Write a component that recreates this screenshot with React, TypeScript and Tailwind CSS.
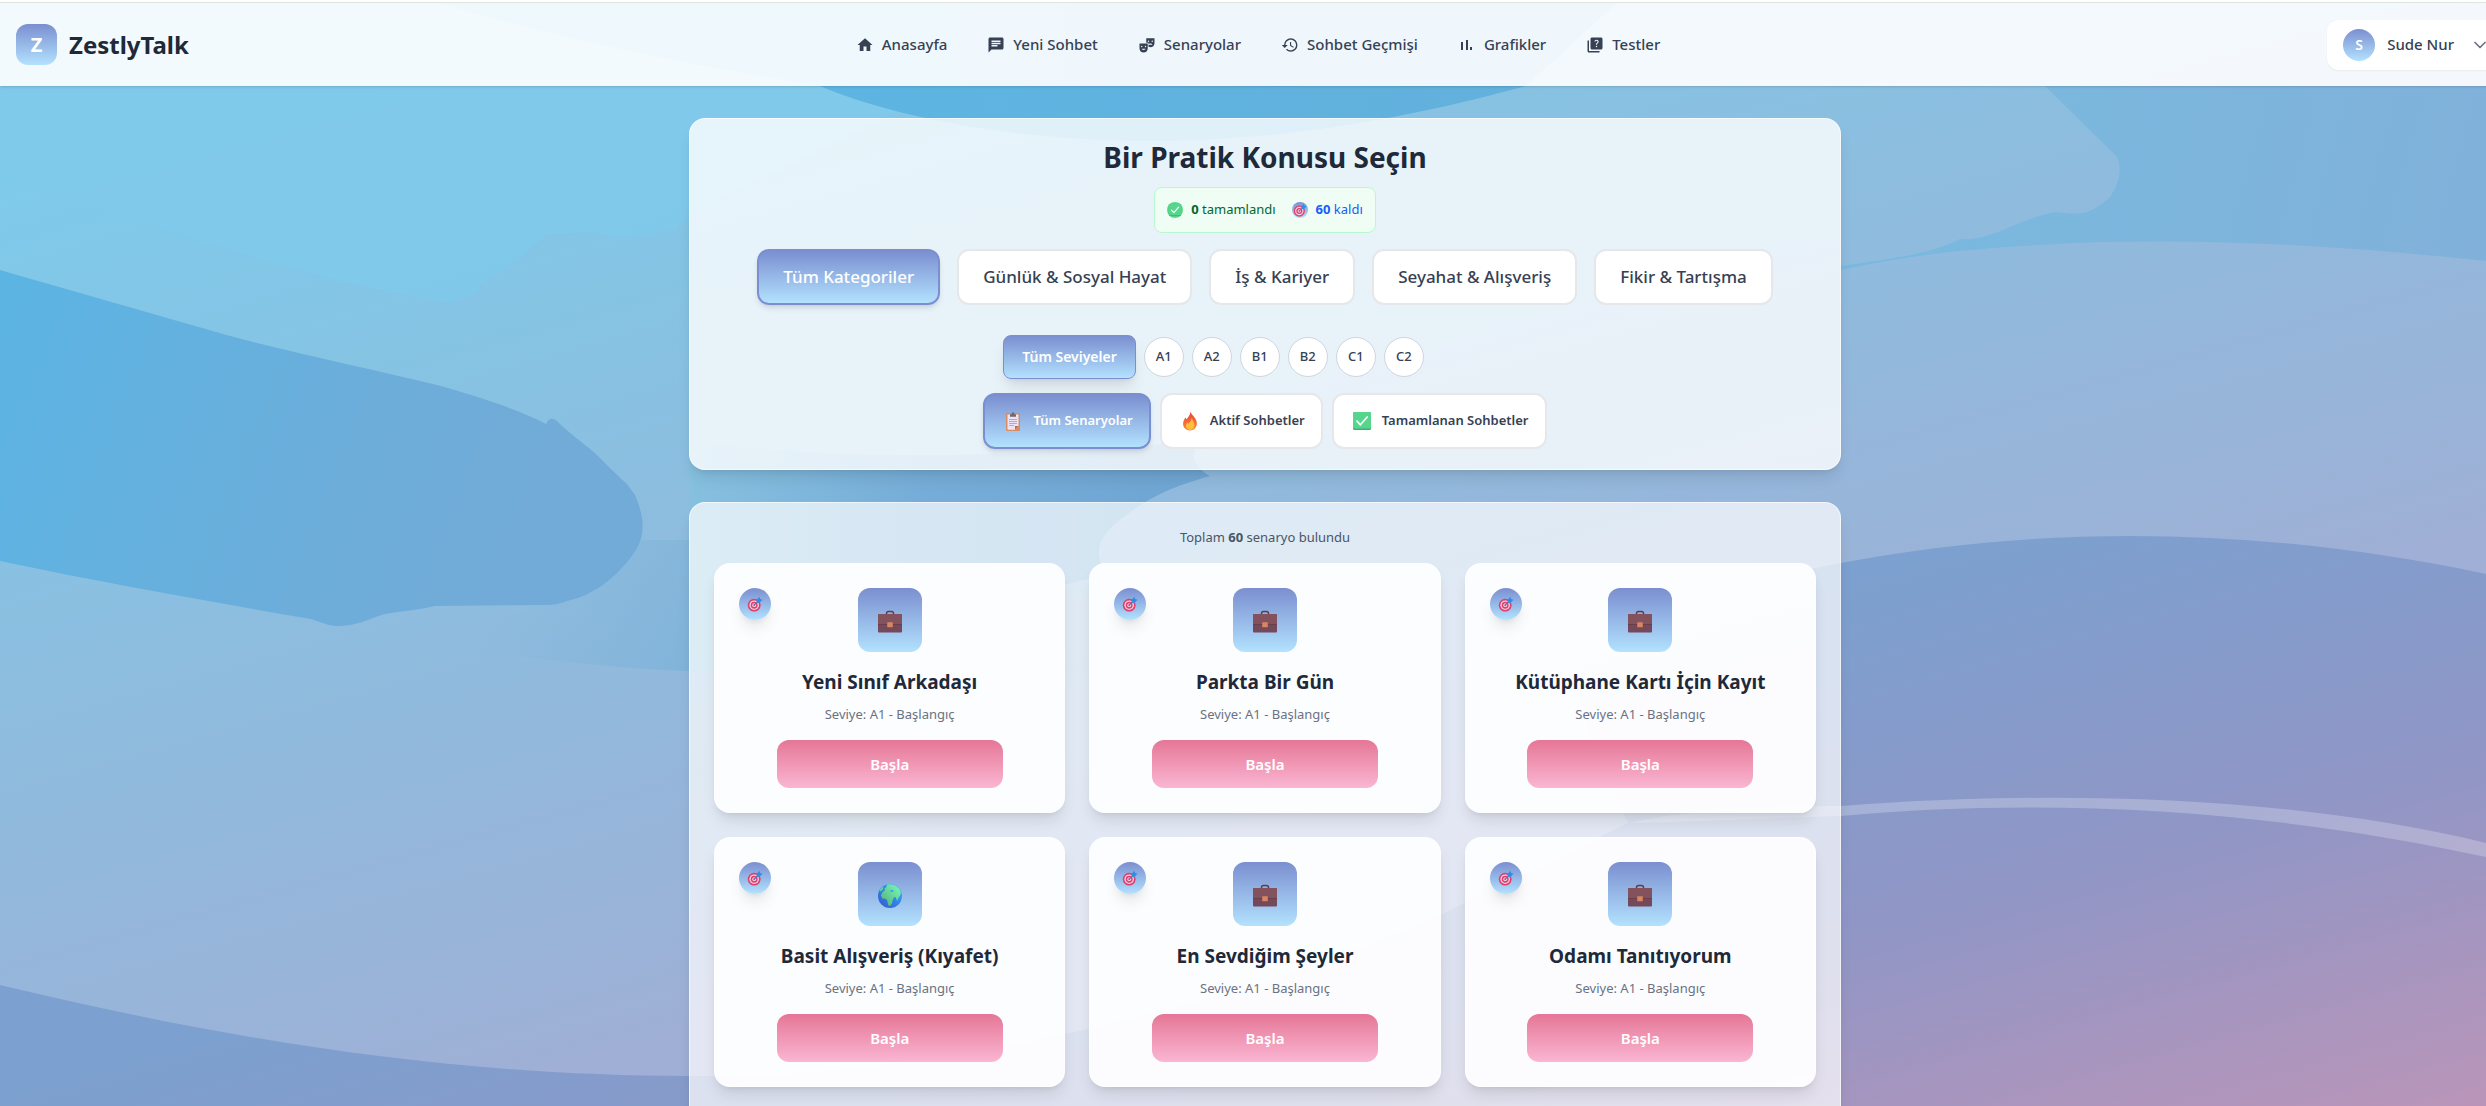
import React from "react";
import { MdHome, MdChat, MdTheaterComedy, MdHistory, MdQuiz } from "react-icons/md";
import { ChevronDown } from "lucide-react";

function BarsIcon({ className }: { className?: string }) {
  return (
    <svg className={className} viewBox="0 0 18 18" fill="currentColor" aria-hidden="true">
      <rect x="3" y="6" width="2" height="8" />
      <rect x="8" y="4" width="2" height="10" />
      <rect x="12" y="11" width="2" height="3" />
    </svg>
  );
}

const navItems = [
  { label: "Anasayfa", Icon: MdHome },
  { label: "Yeni Sohbet", Icon: MdChat },
  { label: "Senaryolar", Icon: MdTheaterComedy },
  { label: "Sohbet Geçmişi", Icon: MdHistory },
  { label: "Grafikler", Icon: BarsIcon },
  { label: "Testler", Icon: MdQuiz },
];

const categories = ["Günlük & Sosyal Hayat", "İş & Kariyer", "Seyahat & Alışveriş", "Fikir & Tartışma"];
const levels = ["A1", "A2", "B1", "B2", "C1", "C2"];

const scenarios = [
  { title: "Yeni Sınıf Arkadaşı", icon: "briefcase" },
  { title: "Parkta Bir Gün", icon: "briefcase" },
  { title: "Kütüphane Kartı İçin Kayıt", icon: "briefcase" },
  { title: "Basit Alışveriş (Kıyafet)", icon: "globe" },
  { title: "En Sevdiğim Şeyler", icon: "briefcase" },
  { title: "Odamı Tanıtıyorum", icon: "briefcase" },
];

function Wallpaper() {
  return (
    <svg
      className="absolute inset-0 h-full w-full"
      viewBox="0 0 2486 1106"
      preserveAspectRatio="none"
      aria-hidden="true"
    >
      <defs>
        <linearGradient id="sky" gradientUnits="userSpaceOnUse" x1="0" y1="80" x2="296" y2="1136">
          <stop offset="0" stopColor="#7acdea" />
          <stop offset=".12" stopColor="#80c9ea" />
          <stop offset=".35" stopColor="#86c3e3" />
          <stop offset=".65" stopColor="#90badd" />
          <stop offset=".9" stopColor="#9ab3d8" />
          <stop offset="1" stopColor="#9fafd5" />
        </linearGradient>
        <linearGradient id="dusk" gradientUnits="userSpaceOnUse" x1="2000" y1="540" x2="2182" y2="1191">
          <stop offset="0" stopColor="#7ca0cf" />
          <stop offset=".5" stopColor="#9096c6" />
          <stop offset="1" stopColor="#ba95b9" />
        </linearGradient>
        <linearGradient id="stroke" gradientUnits="userSpaceOnUse" x1="0" y1="350" x2="500" y2="560">
          <stop offset="0" stopColor="#5cb4e3" />
          <stop offset=".7" stopColor="#6dadda" />
          <stop offset="1" stopColor="#72abd8" />
        </linearGradient>
        <linearGradient id="east" gradientUnits="userSpaceOnUse" x1="1900" y1="86" x2="2486" y2="250">
          <stop offset="0" stopColor="#79b9df" />
          <stop offset="1" stopColor="#81b1da" />
        </linearGradient>
        <linearGradient id="veil" gradientUnits="userSpaceOnUse" x1="520" y1="580" x2="690" y2="690">
          <stop offset="0" stopColor="#80b5da" stopOpacity="0" />
          <stop offset="1" stopColor="#80b3d9" />
        </linearGradient>
        <linearGradient id="middle" gradientUnits="userSpaceOnUse" x1="690" y1="0" x2="1150" y2="0">
          <stop offset="0" stopColor="#86c0df" />
          <stop offset=".5" stopColor="#76add8" />
          <stop offset="1" stopColor="#70a6d3" />
        </linearGradient>
        <linearGradient id="top" gradientUnits="userSpaceOnUse" x1="800" y1="0" x2="1526" y2="0">
          <stop offset="0" stopColor="#5db5e2" />
          <stop offset="1" stopColor="#63b0dc" />
        </linearGradient>
      </defs>
      <rect width="2486" height="1106" fill="url(#sky)" />
      <path
        d="M0 0H900V110L690 215C680 230 650 238 615 238L592 232L548 234C520 258 500 275 484 281C476 288 482 294 470 295L453 303L440 301C400 294 360 286 320 276L270 262C200 240 100 215 0 170Z"
        fill="#80c9ea"
        opacity=".9"
      />
      <path d="M430 645L548 600L635 540L690 540V671C640 670 590 664 548 660Z" fill="url(#veil)" />
      <path
        d="M0 270C70 290 150 313 223 334C300 355 365 367 437 385C480 397 520 410 546 424C549 417 554 417 560 424C575 438 588 446 598 456C612 470 618 476 627 484L635 495C645 518 645 535 636 550C620 574 600 590 578 598C568 600 560 605 548 605L435 606C420 610 400 611 385 614C370 618 360 626 335 626C322 624 318 620 305 618C200 600 90 580 0 561Z"
        fill="url(#stroke)"
      />
      <path d="M430 0C560 40 700 66 820 86C880 112 1000 141 1150 141C1300 141 1430 112 1526 86L1620 0Z" fill="url(#top)" />
      <path
        d="M690 440C800 458 1000 462 1200 440C1188 455 1195 468 1210 476C1160 490 1140 504 1120 520C1094 540 1094 556 1108 576C1000 590 900 660 690 671Z"
        fill="url(#middle)"
      />
      <path
        d="M2045 86H2486V261C2360 248 2240 239 2100 242C2000 246 1920 252 1841 270L1841 266C1880 260 1930 255 1960 239C1990 242 2015 220 2055 212C2075 214 2085 216 2100 205C2120 195 2126 160 2112 152Z"
        fill="url(#east)"
      />
      <path
        d="M0 985C230 1040 450 1076 690 1076C950 1078 1250 1000 1440 915L1628 823C1600 760 1575 720 1575 650C1650 610 1750 580 1841 563C2050 523 2270 528 2486 574V1106H0Z"
        fill="url(#dusk)"
      />
      <path
        d="M1628 823C1700 808 1760 806 1841 806C2050 790 2290 795 2486 843V857C2280 812 2060 796 1841 816C1770 818 1690 822 1628 823Z"
        fill="#fff"
        opacity=".24"
      />
    </svg>
  );
}

function CheckEmoji({ className }: { className: string }) {
  return (
    <svg className={className} viewBox="0 0 20 20" aria-hidden="true">
      <rect x="1" y="1" width="18" height="18" rx="1.5" fill="#3fae78" />
      <rect x="1" y="1" width="18" height="16.5" rx="1.5" fill="#55d68c" />
      <path d="M5 10.2l3.4 3.6L15.2 6" fill="none" stroke="#fff" strokeWidth="1.7" strokeLinecap="round" strokeLinejoin="round" />
    </svg>
  );
}

function TargetEmoji({ className }: { className: string }) {
  return (
    <svg className={className} viewBox="0 0 20 20" aria-hidden="true">
      <circle cx="9" cy="11.5" r="8" fill="#dd3f6f" />
      <circle cx="9" cy="11.5" r="6" fill="#f3d3e2" />
      <circle cx="9" cy="11.5" r="4.3" fill="#dd3f6f" />
      <circle cx="9" cy="11.5" r="2.4" fill="#f3d3e2" />
      <circle cx="9" cy="11.5" r="1.1" fill="#dd3f6f" />
      <path d="M9 11.5l6-6" stroke="#5a6fa8" strokeWidth="1.3" />
      <path d="M12 8.5V4.6L15.6 1l.8 2.8L19.4 4.8 15.6 8.5z" fill="#2e8fe0" />
    </svg>
  );
}

function BriefcaseEmoji({ className }: { className: string }) {
  return (
    <svg className={className} viewBox="0 0 24 24" aria-hidden="true">
      <path d="M8.5 5.8V3.6c0-1.3.8-2.1 2-2.1h3c1.200 0 2 .8 2 2.1v2.200" fill="none" stroke="#5d3f47" strokeWidth="1.500" />
      <rect x="0" y="4" width="24" height="18.500" rx="1" fill="#74495a" />
      <path d="M1 4h22a1 1 0 0 1 1 1v9.500H0V5a1 1 0 0 1 1-1z" fill="#83525c" />
      <path d="M0 14.500h24" stroke="#633c4a" strokeWidth=".8" />
      <rect x="9.200" y="12.200" width="5.600" height="5" rx=".6" fill="#d98561" />
    </svg>
  );
}

function GlobeEmoji({ className }: { className: string }) {
  return (
    <svg className={className} viewBox="0 0 24 24" aria-hidden="true">
      <defs>
        <linearGradient id="ocean" x1="0" y1="1" x2="1" y2="0">
          <stop offset="0" stopColor="#3b55c4" />
          <stop offset=".6" stopColor="#2f8cf0" />
          <stop offset="1" stopColor="#3bc0ff" />
        </linearGradient>
        <linearGradient id="land" x1="0" y1="1" x2="1" y2="0">
          <stop offset="0" stopColor="#4fae7c" />
          <stop offset="1" stopColor="#7dfab4" />
        </linearGradient>
      </defs>
      <circle cx="12" cy="12" r="12" fill="url(#ocean)" />
      <path
        d="M9 .4c4-.9 9 .6 12 4.100 1.600 2 2 4 1.600 6l-2.200 3.500-1.400 3.200-1.200-4.200-2.300.8-1 3.200c-.5 2.500-1.200 3.500-2.500 5l-1.700-.7-1.300-5.600-2.300-1.200-2.200.2-1.600-3.300 1.600-3.400 2.200-1.300-.2-2.200 1.700-1.300z"
        fill="url(#land)"
      />
      <path d="M1.600 6.200L4.400 3l1.200.6-1 2.200-2.200 1.600z" fill="#63d79a" />
      <path d="M11.500 6.800l3.200-.8 1.300 1.300-2.800.8z" fill="#2f9df0" />
    </svg>
  );
}

function ClipboardEmoji({ className }: { className: string }) {
  return (
    <svg className={className} viewBox="0 0 20 20" aria-hidden="true">
      <rect x="3" y="2" width="14" height="18" rx="1" fill="#d98c62" />
      <path d="M4.500 3.500h11V15l-3.500 3.700H4.500z" fill="#ece4f4" />
      <path d="M15.500 15H12v3.700z" fill="#c4683c" />
      <path d="M7 5.800V3.200h1.700c0-2.600 2.600-2.600 2.600 0H13v2.600z" fill="#6f6673" />
      <path d="M6 8.500h8M6 10.500h8M6 12.500h8M6 14.500h5" stroke="#a79bb5" strokeWidth=".8" />
    </svg>
  );
}

function FireEmoji({ className }: { className: string }) {
  return (
    <svg className={className} viewBox="0 0 20 20" aria-hidden="true">
      <defs>
        <linearGradient id="flame" x1="0" y1="0" x2="0" y2="1">
          <stop offset="0" stopColor="#e8453c" />
          <stop offset="1" stopColor="#ff8a30" />
        </linearGradient>
      </defs>
      <path d="M10.600.8c.6 3 4.900 5.400 6 9.400 1.200 5.200-2 9.300-6.600 9.300S2.200 15.900 3.300 11c.4-2 1.400-3.400 2.200-4.600.5.800.8 1.200 1 1.900C8.600 6 9.900 4 10.600.8z" fill="url(#flame)" />
      <path d="M11.800 6.800c.2 2.200 2.800 4.200 2.700 7.400-.1 2.700-2 4.600-4.300 4.600-2.600 0-4.500-1.900-4.200-4.500.2-1.500 1-2.300 1.500-2.900.5.500.6.800.8 1.300 2-1.500 3.200-3.300 3.500-5.900z" fill="#ffbd3c" />
    </svg>
  );
}

function Header() {
  return (
    <header className="relative border-t-2 border-white bg-white/90 shadow-sm">
      <div className="flex h-[84px] items-center justify-between border-t border-[#dde5dd] px-4">
        <a href="#" className="flex shrink-0 items-center gap-3">
          <span className="flex size-[41px] items-center justify-center rounded-xl bg-linear-to-b from-[#7b8fd0] to-[#b3e2fe] text-xl font-bold text-white">
            Z
          </span>
          <span className="text-2xl font-bold text-gray-800">ZestlyTalk</span>
        </a>
        <nav className="flex items-center gap-10">
          {navItems.map(({ label, Icon }) => (
            <a key={label} href="#" className="flex items-center gap-2 text-[15px] font-medium text-gray-700">
              <Icon className="size-[18px]" />
              {label}
            </a>
          ))}
        </nav>
        <button
          type="button"
          className="flex h-[50px] shrink-0 items-center gap-3 rounded-xl bg-white pr-6 pl-4 text-[15px] font-medium text-gray-700 shadow-xs"
        >
          <span className="flex size-8 items-center justify-center rounded-full bg-linear-to-b from-[#7b8fd0] to-[#b3e2fe] text-sm font-semibold text-white">
            S
          </span>
          <span className="mr-1">Sude Nur</span>
          <ChevronDown className="size-5 text-gray-500" />
        </button>
      </div>
    </header>
  );
}

function Filters() {
  return (
    <section className="flex flex-col items-center rounded-2xl border border-white/60 bg-white/80 px-6 py-5 shadow-lg">
      <h1 className="mb-3 text-[28px] leading-9 font-bold text-gray-800">Bir Pratik Konusu Seçin</h1>
      <div className="mb-4 flex h-[46px] items-center gap-4 rounded-lg border border-green-200 bg-green-50 px-3 text-[13px]">
        <span className="flex items-center gap-2 text-green-800">
          <span className="flex size-4 items-center justify-center overflow-hidden rounded-full bg-[#5fdc8c]">
            <CheckEmoji className="size-3.5" />
          </span>
          <span>
            <b>0</b> tamamlandı
          </span>
        </span>
        <span className="flex items-center gap-2 text-blue-600">
          <span className="flex size-4 items-center justify-center rounded-full bg-linear-to-b from-[#7b8fd0] to-[#b3e2fe]">
            <TargetEmoji className="size-3.5" />
          </span>
          <span>
            <b>60</b> kaldı
          </span>
        </span>
      </div>
      <div className="mb-[30px] flex flex-wrap justify-center gap-[17px]">
        <button
          type="button"
          className="h-14 rounded-xl border-2 border-[#7b8fd0] bg-linear-to-b from-[#7b8fd0] to-[#b3e2fe] px-6 text-[17px] font-medium text-white shadow-md"
        >
          Tüm Kategoriler
        </button>
        {categories.map((name) => (
          <button
            key={name}
            type="button"
            className="h-14 rounded-xl border-2 border-gray-200 bg-white px-6 text-[17px] font-medium text-gray-700"
          >
            {name}
          </button>
        ))}
      </div>
      <div className="mb-3.5 flex items-center gap-2 pr-[103px]">
        <button
          type="button"
          className="h-11 rounded-lg border border-[#7b8fd0] bg-linear-to-b from-[#7b8fd0] to-[#b3e2fe] px-[18px] text-sm font-semibold text-white shadow-lg"
        >
          Tüm Seviyeler
        </button>
        {levels.map((level) => (
          <button
            key={level}
            type="button"
            className="size-10 rounded-full border border-gray-300 bg-white text-[13px] font-medium text-gray-700"
          >
            {level}
          </button>
        ))}
      </div>
      <div className="flex gap-[9px] text-[13px] font-semibold text-gray-700">
        <button
          type="button"
          className="flex h-14 items-center gap-2 rounded-xl border-2 border-[#7b8fd0] bg-linear-to-b from-[#7b8fd0] to-[#b3e2fe] px-4 text-white shadow-md"
        >
          <span className="flex w-6 justify-center">
            <ClipboardEmoji className="size-5" />
          </span>
          Tüm Senaryolar
        </button>
        <button type="button" className="flex h-14 items-center gap-2 rounded-xl border-2 border-gray-200 bg-white px-4">
          <span className="flex w-6 justify-center">
            <FireEmoji className="size-5" />
          </span>
          Aktif Sohbetler
        </button>
        <button type="button" className="flex h-14 items-center gap-2 rounded-xl border-2 border-gray-200 bg-white px-4">
          <span className="flex w-6 justify-center">
            <CheckEmoji className="size-5" />
          </span>
          Tamamlanan Sohbetler
        </button>
      </div>
    </section>
  );
}

function ScenarioCard({ title, icon }: { title: string; icon: string }) {
  return (
    <article className="relative flex flex-col items-center rounded-2xl border border-white/50 bg-white/90 p-6 shadow-lg">
      <span className="absolute top-6 left-6 flex size-8 items-center justify-center rounded-full bg-linear-to-b from-[#7b8fd0] to-[#b3e2fe] shadow-lg">
        <TargetEmoji className="size-4" />
      </span>
      <span className="mb-4 flex size-16 items-center justify-center rounded-xl bg-linear-to-b from-[#7b8fd0] to-[#b3e2fe] pt-1">
        {icon === "globe" ? <GlobeEmoji className="size-6" /> : <BriefcaseEmoji className="size-6" />}
      </span>
      <h2 className="mb-2 text-[19px] leading-7 font-bold text-gray-800">{title}</h2>
      <p className="mb-4 text-[13px] leading-5 text-gray-500">Seviye: A1 - Başlangıç</p>
      <button
        type="button"
        className="h-12 w-3/4 rounded-xl bg-linear-to-b from-[#e57697] to-[#f9b6d3] text-[15px] font-semibold text-white"
      >
        Başla
      </button>
    </article>
  );
}

export default function App() {
  return (
    <div className="relative h-screen overflow-hidden font-['Noto_Sans','Open_Sans',sans-serif]">
      <Wallpaper />
      <div className="w-[calc(100%+44px)]">
        <Header />
        <main className="relative mx-auto mt-8 flex max-w-6xl flex-col gap-8">
          <Filters />
          <section className="rounded-2xl border border-white/60 bg-white/70 p-6 pb-12 shadow-lg">
            <p className="mb-4 text-center text-[13px] leading-5 text-gray-600">
              Toplam <b>60</b> senaryo bulundu
            </p>
            <div className="grid grid-cols-3 gap-6">
              {scenarios.map((scenario) => (
                <ScenarioCard key={scenario.title} {...scenario} />
              ))}
            </div>
          </section>
        </main>
      </div>
    </div>
  );
}
